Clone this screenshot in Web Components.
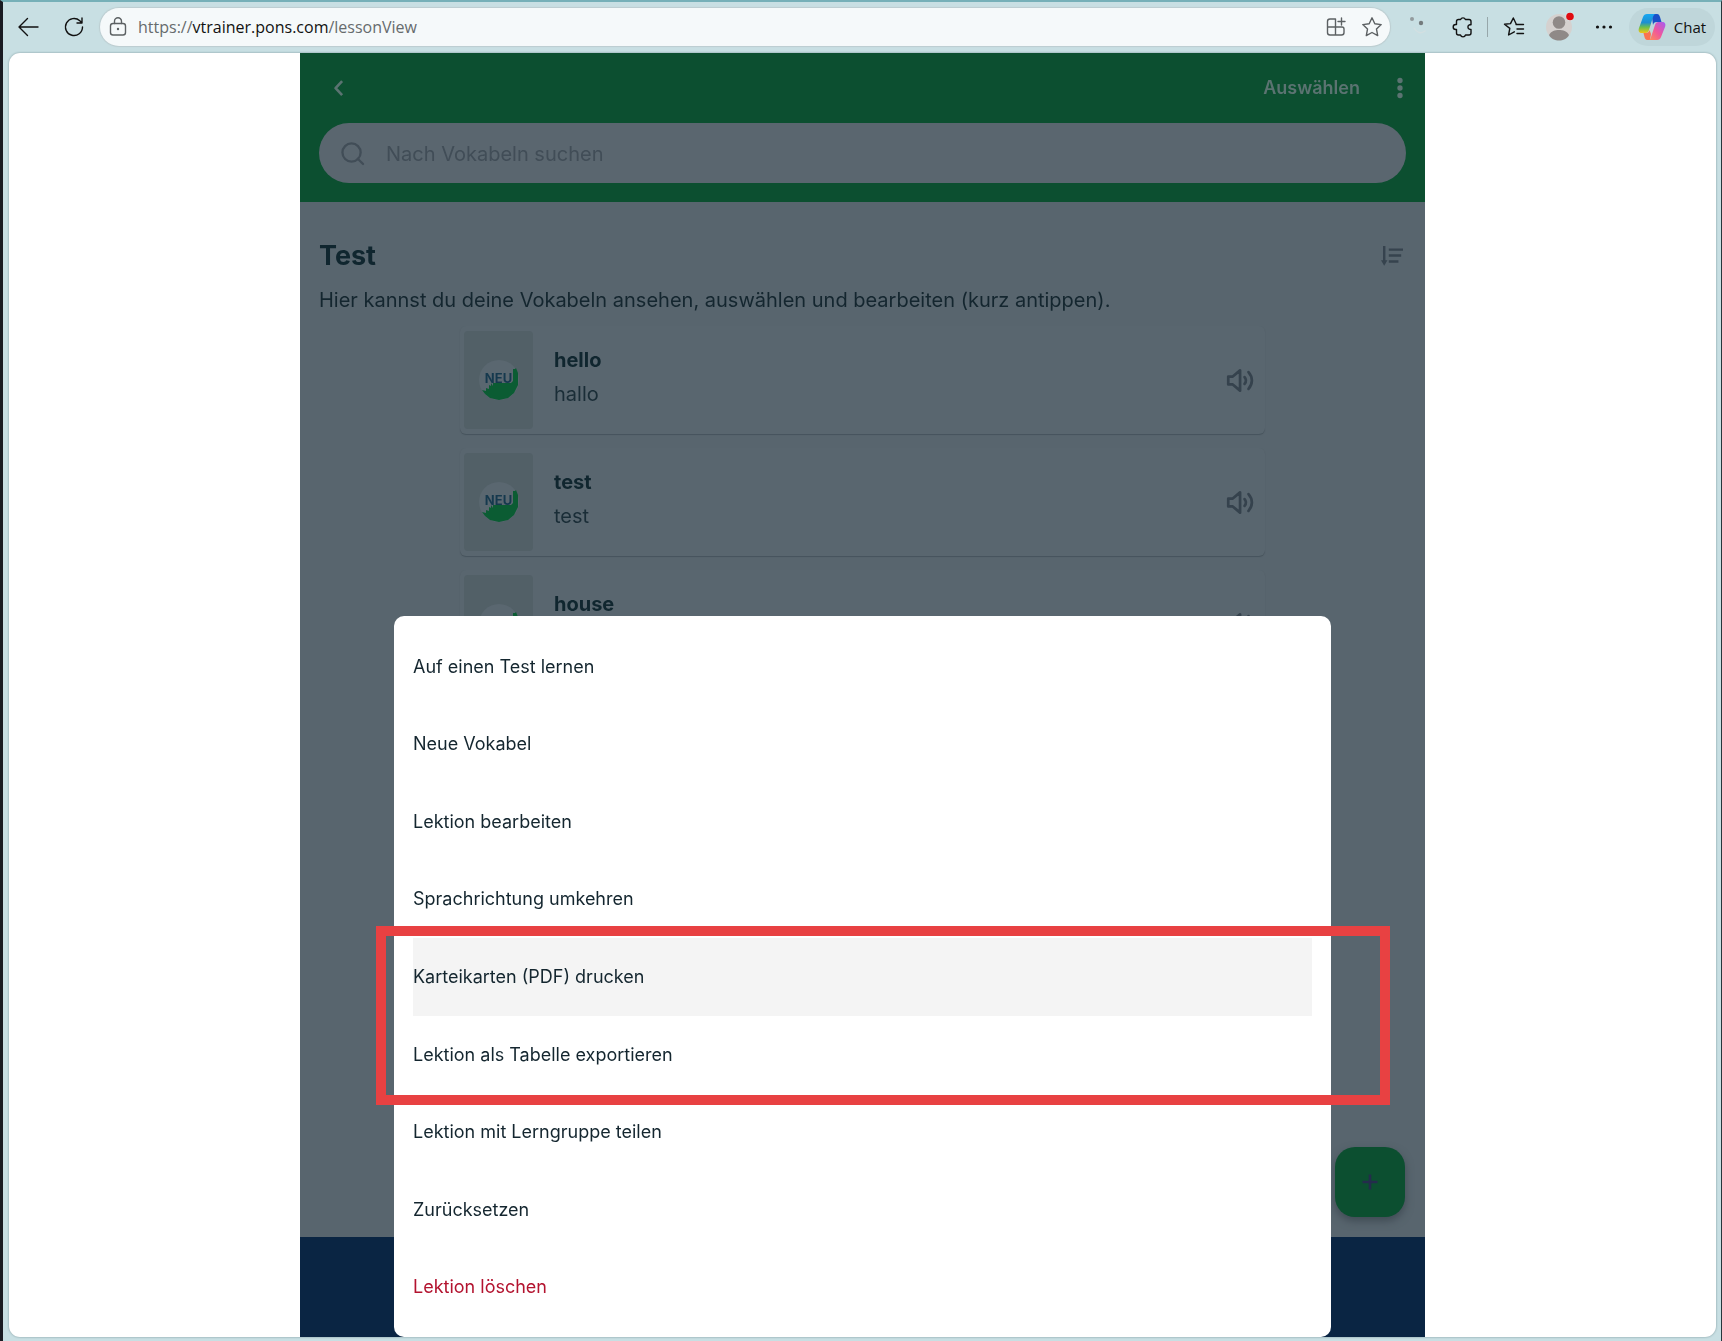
<!DOCTYPE html>
<html lang="de">
<head>
<meta charset="utf-8">
<title>PONS Vokabeltrainer</title>
<style>
  html, body { height: 100%; }
  body {
    margin: 0;
    overflow: hidden;
    font-family: Inter, "Liberation Sans", sans-serif;
    color: #12262f;
  }
</style>
</head>
<body>
<browser-window>
  <browser-toolbar slot="toolbar"></browser-toolbar>
  <trainer-app>
    <vocab-card word="hello" translation="hallo" badge="NEU"></vocab-card>
    <vocab-card word="test" translation="test" badge="NEU"></vocab-card>
    <vocab-card word="house"></vocab-card>
    <action-sheet slot="sheet">
      <sheet-item>Auf einen Test lernen</sheet-item>
      <sheet-item>Neue Vokabel</sheet-item>
      <sheet-item>Lektion bearbeiten</sheet-item>
      <sheet-item>Sprachrichtung umkehren</sheet-item>
      <sheet-item active>Karteikarten (PDF) drucken</sheet-item>
      <sheet-item>Lektion als Tabelle exportieren</sheet-item>
      <sheet-item>Lektion mit Lerngruppe teilen</sheet-item>
      <sheet-item>Zurücksetzen</sheet-item>
      <sheet-item danger>Lektion löschen</sheet-item>
    </action-sheet>
  </trainer-app>
</browser-window>

<script>
(function () {
  const ICONS = {
    back: '<path d="M21 12H2.500M10.500 3.500 2 12l8.500 8.500"/>',
    reload: '<path d="M20.500 12a8.500 8.500 0 1 1-2.700-6.200l1.700 1.700M20 3v5h-5"/>',
    lock: '<rect x="4.500" y="8.500" width="15" height="11.500" rx="2.500"/><path d="M8.500 8.500V6.300a3.500 3.500 0 0 1 7 0v2.200"/><circle cx="12" cy="14" r="1.200" fill="currentColor" stroke="none"/>',
    apps: '<path d="M11.500 4H6a2.500 2.500 0 0 0-2.500 2.500v11A2.500 2.500 0 0 0 6 20h11.500a2.500 2.500 0 0 0 2.500-2.500V14a2 2 0 0 0-2-2H3.500M11.500 4v16M17.500 3v7M14 6.500h7"/>',
    star: '<path d="m12 2.800 2.800 5.900 6.400.9-4.700 4.500 1.200 6.500-5.700-3.100-5.700 3.100 1.200-6.500-4.700-4.500 6.400-.9z"/>',
    dim: '<circle cx="7" cy="4" r="2" fill="#939b9d" stroke="none"/><circle cx="16" cy="8" r="2.200" fill="#747b7d" stroke="none"/><path d="M9 13c3 5 7 6 11 3" stroke="#d3dfe1"/>',
    puzzle: '<path d="M7.500 4.500h2.100a2.600 2.600 0 0 1 4.800 0H18a2 2 0 0 1 2 2v3.200h-1.200a2.400 2.400 0 0 0 0 4.700H20V18a2 2 0 0 1-2 2h-3.500a2.600 2.600 0 0 1-5 0h-2a2 2 0 0 1-2-2v-3.500H4.700a2.500 2.500 0 0 1 0-5h.8v-3a2 2 0 0 1 2-2z"/>',
    favorites: '<path d="M14 9.500H21.500M15 14h6.500M15 18.500h6.500M12.300 16.800 6.600 20l1.200-6.600L2.500 9.200l6-.6L11.300 3l2.900 6"/>',
    dots: '<g fill="currentColor" stroke="none"><circle cx="5.500" cy="12" r="1.600"/><circle cx="12" cy="12" r="1.600"/><circle cx="18.500" cy="12" r="1.600"/></g>',
    chevron: '<path d="m15 3.500-7.500 8 7.500 8"/>',
    more: '<g fill="currentColor" stroke="none"><circle cx="12" cy="3" r="3.200"/><circle cx="12" cy="12" r="3.200"/><circle cx="12" cy="21" r="3.200"/></g>',
    search: '<circle cx="11" cy="11" r="9.500"/><path d="m17.500 17.500 5.500 5.500"/>',
    sort: '<path d="M3.500 1v17"/><path d="M0 16.500h7l-3.500 6z" fill="currentColor" stroke="none"/><path d="M8.500 5H24M8.500 11.500H22M8.500 18H19"/>',
    speaker: '<path d="M2 8.500h4L12.500 3v18L6 15.500H2zM16.500 9c1.500 1.800 1.500 4.200 0 6M20 4.500c4 4.500 4 10.500 0 15"/>',
    plus: '<path d="M12 4.500v15M4.500 12h15"/>',
  };

  function define(name, html, setup) {
    const template = document.createElement('template');
    template.innerHTML = html;

    customElements.define(name, class extends HTMLElement {
      constructor() {
        super();
        this.attachShadow({ mode: 'open' }).append(template.content.cloneNode(true));
      }

      connectedCallback() {
        if (setup) setup(this, this.shadowRoot);
      }
    });
  }

  define('ui-icon', `
    <style>
      :host { display: block; flex: none; width: 24px; height: 24px; }
      svg {
        display: block;
        width: 100%;
        height: 100%;
        overflow: visible;
        fill: none;
        stroke: currentColor;
        stroke-width: var(--stroke, 1.400);
        stroke-linejoin: round;
        stroke-linecap: var(--cap, round);
      }
    </style>
    <svg viewBox="0 0 24 24" aria-hidden="true"></svg>
  `, (host, root) => {
    root.querySelector('svg').innerHTML = ICONS[host.getAttribute('name')] || '';
  });

  define('browser-window', `
    <style>
      :host {
        display: flex;
        flex-direction: column;
        box-sizing: border-box;
        height: 100vh;
        border-left: 3px solid #191b22;
        border-right: 1px solid #26363c;
        border-top: 2px solid #76b0b8;
        background: #c8dfe3;
      }
      main {
        flex: 1;
        min-height: 0;
        margin: 0 5px 4px 6px;
        display: flex;
        justify-content: center;
        overflow: hidden;
        border-radius: 11px;
        background: #fff;
      }
      .shade {
        display: flex;
        flex: 1;
        min-height: 0;
        flex-direction: column;
        filter: drop-shadow(0 0 1px #7f9a9f);
      }
    </style>
    <slot name="toolbar"></slot>
    <div class="shade"><main><slot></slot></main></div>
  `);

  define('browser-toolbar', `
    <style>
      :host {
        display: flex;
        align-items: center;
        box-sizing: border-box;
        height: 51px;
        padding: 0 6px 1px 0;
        color: #111;
        font-family: "Open Sans", "Noto Sans", sans-serif;
      }
      button {
        display: flex;
        align-items: center;
        justify-content: center;
        width: 45px;
        height: 38px;
        padding: 0;
        border: 0;
        background: none;
        color: inherit;
        font: inherit;
      }
      .first { margin-left: 3px; }
      .wide { width: 46px; }
      .address {
        flex: 1;
        display: flex;
        align-items: center;
        height: 38px;
        margin: 0 4px;
        padding-left: 6px;
        box-sizing: border-box;
        border-radius: 19px;
        background: #f5f9fa;
        box-shadow: 0 0 1px 1px #bccdd0;
        color: #5c6163;
      }
      .address button { width: 36px; }
      .address .lock { width: 24px; }
      .url { flex: 1; margin-left: 8px; padding-bottom: 1px; font-size: 16px; line-height: 24px; color: #666b6d; text-decoration: none; }
      .url b { font-weight: 400; color: #111; }
      .line { width: 1px; height: 20px; margin: 0 3px 0 1px; background: #97a7aa; }
      .avatar svg { width: 32px; height: 32px; overflow: visible; }
      .chat {
        width: 86px;
        gap: 8px;
        margin-left: 3px;
        border-radius: 19px;
        background: #bfd6da;
        font-size: 15px;
        color: #111;
      }
      .chat svg { width: 28px; height: 28px; }
      .chat span { padding-bottom: 1px; }
    </style>
    <button class="first" aria-label="Zurück"><ui-icon name="back"></ui-icon></button>
    <button aria-label="Aktualisieren"><ui-icon name="reload"></ui-icon></button>
    <div class="address">
      <button class="lock" aria-label="Websiteinformationen"><ui-icon name="lock"></ui-icon></button>
      <a class="url" href="https://vtrainer.pons.com/lessonView">https://<b>vtrainer.pons.com</b>/lessonView</a>
      <button aria-label="App installieren"><ui-icon name="apps"></ui-icon></button>
      <button aria-label="Favorit"><ui-icon name="star"></ui-icon></button>
    </div>
    <button class="wide" aria-label="Erweiterung"><ui-icon name="dim"></ui-icon></button>
    <button class="wide" aria-label="Erweiterungen"><ui-icon name="puzzle"></ui-icon></button>
    <span class="line"></span>
    <button aria-label="Favoriten"><ui-icon name="favorites"></ui-icon></button>
    <button class="avatar" aria-label="Profil">
      <svg viewBox="0 0 32 32">
        <circle cx="16" cy="16" r="13" fill="#d5d1cf"/>
        <circle cx="16" cy="11.500" r="6.300" fill="#8f8987"/>
        <path d="M6 24c2-4 6-5 10-5s8 1 10 5c-2 4-6 5.500-10 5.500S8 28 6 24z" fill="#8f8987"/>
        <circle cx="27" cy="5.500" r="4.500" fill="#d5e5e8"/>
        <circle cx="27" cy="5.500" r="3.800" fill="#e00b10"/>
      </svg>
    </button>
    <button aria-label="Einstellungen"><ui-icon name="dots"></ui-icon></button>
    <button class="chat">
      <svg viewBox="0 0 28 28" aria-hidden="true">
        <defs>
          <linearGradient id="a" x1="0" y1="0" x2="0" y2="1">
            <stop offset="0" stop-color="#18a7f2"/><stop offset=".45" stop-color="#1d8fd0"/>
            <stop offset=".7" stop-color="#6cc04a"/><stop offset="1" stop-color="#f3c417"/>
          </linearGradient>
          <linearGradient id="b" x1="1" y1="0" x2="0" y2="1">
            <stop offset="0" stop-color="#a45cf4"/><stop offset=".5" stop-color="#f0569c"/><stop offset="1" stop-color="#ff9352"/>
          </linearGradient>
        </defs>
        <path d="M16 1h3c2 0 2.500 1.500 3 3l1.500 5h-5c-2 0-3 1-3.500 3l-1-8z" fill="#1b50c8"/>
        <path d="M9 1h9c-2 0-2.600 1.500-3 3l-4 13c-.6 2-1.500 3-3.500 3H4c-3 0-4-2-3-5L5 4c.7-2 2-3 4-3z" fill="url(#a)"/>
        <path d="M12 27H9.500c-2 0-2.600-1.500-3-3l-1-4H8c2 0 3-1 3.500-3l1.500 4z" fill="#fa7350"/>
        <path d="M19 27h-9c2 0 2.600-1.500 3-3l4-12c.6-2 1.500-3 3.500-3H24c3 0 4 2 3 5l-4 10c-.7 2-2 3-4 3z" fill="url(#b)"/>
      </svg>
      <span>Chat</span>
    </button>
  `);

  define('trainer-app', `
    <style>
      :host {
        position: relative;
        display: flex;
        flex-direction: column;
        width: 100%;
        max-width: 1125px;
        background: #58656e;
      }
      button { padding: 0; border: 0; background: none; color: inherit; font: inherit; }
      header {
        display: flex;
        flex-direction: column;
        gap: 18px;
        padding: 18px 19px 19px;
        background: #0c4f30;
        color: #5b7371;
      }
      .bar { display: flex; align-items: center; height: 34px; }
      .back { --stroke: 3; --cap: butt; margin-left: 10px; }
      .back ui-icon { width: 21px; height: 21px; }
      .select { margin-left: auto; font-size: 18px; line-height: 24px; font-weight: 600; }
      .more { margin: 0 -4px 0 30px; }
      .more ui-icon { width: 20px; height: 20px; }
      .search {
        display: flex;
        align-items: center;
        gap: 22px;
        height: 60px;
        padding: 0 22px;
        border-radius: 30px;
        background: #5a666f;
        color: #414d57;
        --stroke: 2.400;
      }
      .search ui-icon { width: 23px; height: 23px; }
      input {
        flex: 1;
        min-width: 0;
        padding: 2px 0 0;
        border: 0;
        outline: 0;
        background: none;
        font: 20px/28px Inter, "Liberation Sans", sans-serif;
        color: inherit;
      }
      input::placeholder { color: #414d57; opacity: 1; }
      section { flex: 1; min-height: 0; overflow: hidden; padding: 0 19px; }
      .title { display: flex; align-items: center; justify-content: space-between; padding-top: 36px; }
      h1 { margin: 0; font-size: 27px; line-height: 36px; font-weight: 700; color: #10262f; }
      .sort { --stroke: 2.600; --cap: butt; margin-right: 3px; color: #36434e; }
      .sort ui-icon { width: 22px; height: 22px; }
      p { margin: 12px 0; font-size: 20px; line-height: 28px; color: #14262f; }
      .list { display: flex; flex-direction: column; gap: 14px; width: 805px; max-width: 100%; margin: 0 auto; }
      footer { height: 100px; background: #0a2543; }
      .add {
        position: absolute;
        right: 20px;
        bottom: 120px;
        display: flex;
        align-items: center;
        justify-content: center;
        width: 70px;
        height: 70px;
        border-radius: 20px;
        background: #0c4f30;
        box-shadow: 0 4px 8px #3f4b54;
        color: #242c4c;
        --stroke: 2.600;
        --cap: butt;
      }
      .sheet { position: absolute; left: 94px; right: 94px; bottom: 0; }
    </style>
    <header>
      <div class="bar">
        <button class="back" aria-label="Zurück"><ui-icon name="chevron"></ui-icon></button>
        <button class="select">Auswählen</button>
        <button class="more" aria-label="Mehr"><ui-icon name="more"></ui-icon></button>
      </div>
      <label class="search">
        <ui-icon name="search"></ui-icon>
        <input type="search" placeholder="Nach Vokabeln suchen" aria-label="Nach Vokabeln suchen">
      </label>
    </header>
    <section>
      <div class="title">
        <h1>Test</h1>
        <button class="sort" aria-label="Sortieren"><ui-icon name="sort"></ui-icon></button>
      </div>
      <p>Hier kannst du deine Vokabeln ansehen, auswählen und bearbeiten (kurz antippen).</p>
      <div class="list"><slot></slot></div>
    </section>
    <footer></footer>
    <button class="add" aria-label="Neue Vokabel"><ui-icon name="plus"></ui-icon></button>
    <div class="sheet"><slot name="sheet"></slot></div>
  `);

  define('vocab-card', `
    <style>
      :host {
        display: flex;
        align-items: center;
        flex: none;
        height: 108px;
        padding: 0 12px 0 4px;
        border-radius: 6px;
        background: #59666f;
        box-shadow: 0 1px 1px #46535c;
      }
      .thumb {
        display: grid;
        place-items: center;
        width: 69px;
        height: 98px;
        border-radius: 4px;
        background: #526067;
      }
      .thumb > * { grid-area: 1 / 1; }
      .thumb svg { width: 40px; height: 40px; }
      .badge { padding-bottom: 4px; font-size: 13px; line-height: 16px; font-weight: 700; color: #15394e; }
      .text { flex: 1; margin-left: 21px; padding-bottom: 6px; }
      .word, .translation { min-height: 34px; font-size: 20px; line-height: 34px; }
      .word { font-weight: 700; color: #10262f; }
      .translation { color: #1a2d37; }
      button { padding: 0; border: 0; background: none; color: #35424d; --stroke: 2.400; }
      button ui-icon { width: 27px; height: 27px; }
    </style>
    <div class="thumb">
      <svg viewBox="0 0 40 40" aria-hidden="true">
        <circle cx="20" cy="20" r="20" fill="#5a6770"/>
        <path d="M34 9h2l1-1 2 5v12l-4 8-6 5-9 2-9-2-5-4-3-4 4 1v-3l3 1v-4l2 1v-3l2 3v-3h18l2-2z" fill="#0b5c33"/>
      </svg>
      <span class="badge"></span>
    </div>
    <div class="text">
      <div class="word"></div>
      <div class="translation"></div>
    </div>
    <button aria-label="Anhören"><ui-icon name="speaker"></ui-icon></button>
  `, (host, root) => {
    ['word', 'translation', 'badge'].forEach((key) => {
      root.querySelector(`.${key}`).textContent = host.getAttribute(key) || '';
    });
  });

  define('action-sheet', `
    <style>
      :host {
        position: relative;
        display: flex;
        flex-direction: column;
        box-sizing: border-box;
        min-height: 721px;
        padding: 12px 19px 11px;
        border-radius: 10px;
        background: #fff;
      }
      /* frame around the two export entries */
      .frame {
        position: absolute;
        left: -18px;
        right: -59px;
        top: 310px;
        height: 159px;
        border: 10px solid #e84142;
        pointer-events: none;
      }
    </style>
    <slot></slot>
    <div class="frame"></div>
  `);

  define('sheet-item', `
    <style>
      :host { display: flex; flex: 1; }
      button {
        flex: 1;
        padding: 0;
        border: 0;
        background: none;
        text-align: left;
        font: 18px/24px Inter, "Liberation Sans", sans-serif;
        color: #14262f;
      }
      :host([active]) button { background: #f4f4f4; }
      :host([danger]) button { color: #b3132f; }
    </style>
    <button><slot></slot></button>
  `);
}());
</script>
</body>
</html>
